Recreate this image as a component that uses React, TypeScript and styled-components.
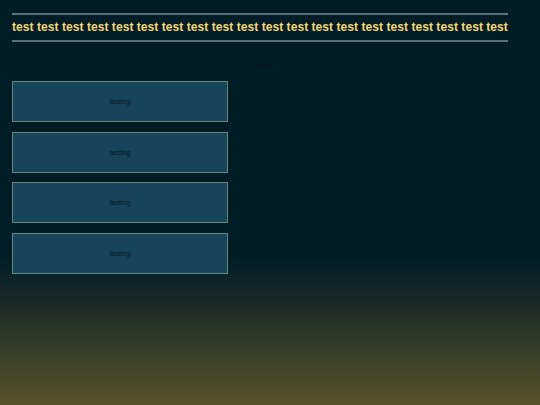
import React from "react";
import styled, { createGlobalStyle } from "styled-components";

const GlobalStyle = createGlobalStyle`
  html, body {
    margin: 0;
    padding: 0;
  }

  html {
    min-height: 100%;
    background: linear-gradient(
      to bottom,
      #001c27 0%,
      #001c27 63%,
      #1a2b27 75%,
      #58532a 100%
    );
  }

  body {
    min-height: 100vh;
    font-family: "Liberation Sans", Arial, sans-serif;
  }
`;

const Page = styled.div`
  display: flex;
  flex-direction: column;
  align-items: flex-start;
  padding: 13px 12px 0 12px;
`;

const Banner = styled.h1`
  display: inline-block;
  margin: 0;
  border-top: 2px solid #5b6f7a;
  border-bottom: 2px solid #5b6f7a;
  line-height: 25px;
  font-size: 12.15px;
  font-weight: bold;
  color: #f1da7c;
  text-shadow: 0 0 1px #000;
  white-space: nowrap;
`;

const Caption = styled.p`
  align-self: stretch;
  margin: 20px 12px 0 0;
  text-align: center;
  font-size: 7px;
  line-height: 8px;
  color: #08161b;
`;

const List = styled.div`
  display: flex;
  flex-direction: column;
  row-gap: 9.7px;
  margin-top: 11px;
`;

const Tile = styled.div`
  box-sizing: border-box;
  width: 216px;
  height: 41px;
  display: flex;
  align-items: center;
  justify-content: center;
  background-color: #16445a;
  border: 1px solid #66887c;
  font-size: 7px;
  color: #08161b;
`;

const words = Array.from({ length: 20 }, () => "test").join(" ");

const App: React.FC = (): JSX.Element => {
  return (
    <>
      <GlobalStyle />
      <Page>
        <Banner>{words}</Banner>
        <Caption>testing</Caption>
        <List>
          {[0, 1, 2, 3].map((i) => (
            <Tile key={i}>testing</Tile>
          ))}
        </List>
      </Page>
    </>
  );
};

export default App;
